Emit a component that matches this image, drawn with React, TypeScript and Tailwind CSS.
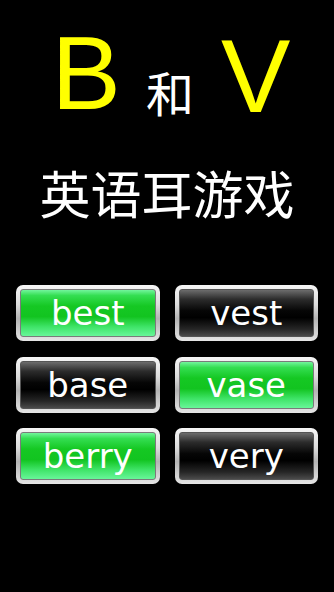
import React from "react";

interface Word {
  text: string;
  lit: boolean;
}

const words: Word[] = [
  { text: "best", lit: true },
  { text: "vest", lit: false },
  { text: "base", lit: false },
  { text: "vase", lit: true },
  { text: "berry", lit: true },
  { text: "very", lit: false },
];

function WordButton({ text, lit }: Word) {
  return (
    <button
      type="button"
      className="h-[56px] rounded-[7px] p-[4px] bg-[linear-gradient(to_bottom,#f6f6f6_0%,#dcdcdc_35%,#b4b4b4_60%,#e6e6e6_100%)]"
    >
      <div
        className={
          lit
            ? "h-full rounded-[3px] border border-[#7a7a7a] flex items-center justify-center bg-[linear-gradient(to_bottom,#72f59c_0%,#34de52_12%,#15c823_35%,#12c420_58%,#3fe468_80%,#68f699_100%)]"
            : "h-full rounded-[3px] border border-[#555] flex items-center justify-center bg-[linear-gradient(to_bottom,#6c6c6c_0%,#2c2c2c_20%,#060606_45%,#000000_60%,#262626_85%,#4a4a4a_100%)]"
        }
      >
        <span className="font-['DejaVu_Sans',sans-serif] text-[34px] leading-none text-white">
          {text}
        </span>
      </div>
    </button>
  );
}

export default function App() {
  return (
    <div className="w-full h-[592px] bg-black flex flex-col overflow-hidden">
      {/* título */}
      <div className="flex items-start justify-center pt-[21px] pl-[8px]">
        <span className="font-['Liberation_Sans',sans-serif] text-[104px] leading-none text-[#ffff00]">
          B
        </span>
        <span className="ml-[25px] mt-[46px] font-['Noto_Sans_CJK_SC',sans-serif] text-[48px] leading-none text-white">
          和
        </span>
        <span className="ml-[27px] mt-[3px] font-['Liberation_Sans',sans-serif] text-[104px] leading-none text-[#ffff00]">
          V
        </span>
      </div>

      <div className="mt-[39px] text-center font-['Noto_Sans_CJK_SC',sans-serif] text-[51px] leading-none text-white">
        英语耳游戏
      </div>

      <div className="mt-[67px] px-[16px] grid grid-cols-2 gap-x-[15px] gap-y-[15.5px]">
        {words.map((w) => (
          <WordButton key={w.text} {...w} />
        ))}
      </div>
    </div>
  );
}
